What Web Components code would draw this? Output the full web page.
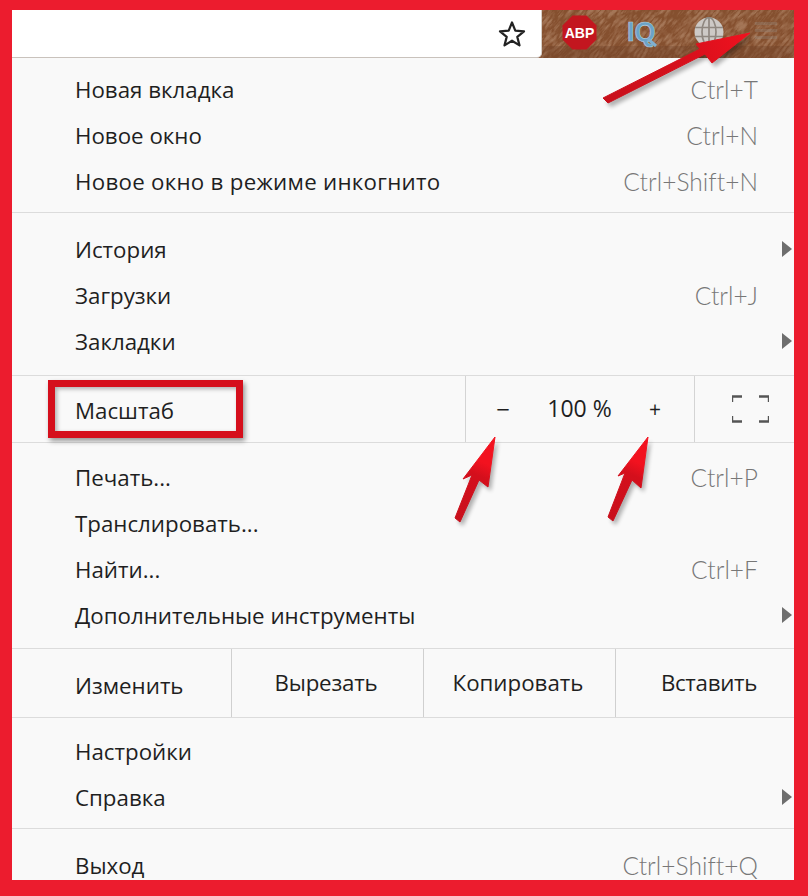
<!DOCTYPE html>
<html lang="ru"><head><meta charset="utf-8"><style>
html,body{margin:0;padding:0;background:#ec1c2e}
body{width:808px;height:896px;overflow:hidden;font-family:"Open Sans","Liberation Sans",sans-serif}
</style></head><body>
<chrome-shot>
<browser-toolbar slot="top"></browser-toolbar>
<menu-group pad="9 7">
<menu-item keys="Ctrl+T">Новая вкладка</menu-item>
<menu-item keys="Ctrl+N">Новое окно</menu-item>
<menu-item keys="Ctrl+Shift+N"><span style="letter-spacing:.27px">Новое окно в режиме инкогнито</span></menu-item>
</menu-group>
<menu-group pad="14 10">
<menu-item sub>История</menu-item>
<menu-item keys="Ctrl+J">Загрузки</menu-item>
<menu-item sub>Закладки</menu-item>
</menu-group>
<zoom-row></zoom-row>
<menu-group pad="12 9">
<menu-item keys="Ctrl+P">Печать...</menu-item>
<menu-item>Транслировать...</menu-item>
<menu-item keys="Ctrl+F">Найти...</menu-item>
<menu-item sub>Дополнительные инструменты</menu-item>
</menu-group>
<edit-row></edit-row>
<menu-group pad="11 7">
<menu-item>Настройки</menu-item>
<menu-item sub>Справка</menu-item>
</menu-group>
<menu-group pad="14 0" last>
<menu-item keys="Ctrl+Shift+Q">Выход</menu-item>
</menu-group>
<annotation-layer slot="over"></annotation-layer>
</chrome-shot>
<script>
function def(name,css,html,init){
  customElements.define(name,class extends HTMLElement{
    constructor(){super();const r=this.attachShadow({mode:"open"});r.innerHTML="<style>"+css+"</style>"+html;}
    connectedCallback(){if(init)init(this,this.shadowRoot);}
  });
}
const TXT='font:400 22.3px/46px "Open Sans","Liberation Sans",sans-serif;';
def("chrome-shot",
`:host{display:block;width:808px;height:896px;position:relative;box-sizing:border-box;padding:10px 14px 16px 12px;background:#ec1c2e}
.win{height:100%;display:flex;flex-direction:column;overflow:hidden;background:#f9f9f9}`,
`<div class="win"><slot name="top"></slot><slot></slot></div><slot name="over"></slot>`);

def("browser-toolbar",
`:host{display:flex;height:48px;flex:none;background:#8a5536}
.omni{width:530px;background:#fff;border-radius:0 0 5px 0;border-right:1px solid #d8cfc8;border-bottom:1px solid #c9c2bc;box-sizing:border-box;display:flex;justify-content:flex-end;align-items:center;padding-right:14px}
.skin{flex:1;position:relative;display:flex;align-items:center;overflow:hidden;padding-bottom:4px;box-sizing:border-box}
.tex{position:absolute;inset:0;width:100%;height:100%}
.ic{position:relative;flex:none}`,
`<div class="omni"><svg width="30" height="30" viewBox="0 0 30 30"><path d="M15 3.500l3.300 8.200 8.700.6-6.700 5.600 2.200 8.500L15 21.700l-7.500 4.700 2.200-8.500L3 12.300l8.700-.6z" fill="none" stroke="#222" stroke-width="2.200" stroke-linejoin="round"/></svg></div>
<div class="skin">
<svg class="tex" viewBox="0 0 251 48" preserveAspectRatio="none"><filter id="l" x="0" y="0" width="100%" height="100%"><feTurbulence type="turbulence" baseFrequency=".07 .24" numOctaves="3" seed="11"/><feColorMatrix values="0 0 0 0 .8  0 0 0 0 .58  0 0 0 0 .42  2.200 0 0 0 -.35"/></filter><rect width="251" height="48" fill="#85502f"/><g transform="rotate(-50 125 24)"><rect x="-30" y="-130" width="310" height="310" filter="url(#l)" opacity=".32"/></g><rect y="36" width="251" height="12" fill="#6b3f27" opacity=".3"/><g fill="#9aa3a3" opacity=".22"><rect x="212" y="12" width="22" height="3"/><rect x="212" y="19" width="22" height="3"/><rect x="212" y="26" width="22" height="3"/></g></svg>
<svg class="ic" style="margin-left:20px" width="35" height="35" viewBox="0 0 35 35"><path d="M10.500.5h14l10 10v14l-10 10h-14l-10-10v-14z" fill="#c3161f"/><text x="17.500" y="23" text-anchor="middle" font-family="Liberation Sans" font-weight="700" font-size="14" fill="#fff">ABP</text></svg>
<svg class="ic" style="margin-left:30px" width="32" height="32" viewBox="0 0 32 32"><text x="0" y="25" font-family="Liberation Sans" font-weight="700" font-size="27" fill="#6ba3c8" stroke="#b4cfdf" stroke-width=".6">IQ</text><path d="M21 23l8 7" stroke="#7fb0d0" stroke-width="3"/></svg>
<svg class="ic" style="margin-left:35px" width="30" height="30" viewBox="0 0 30 30"><circle cx="15" cy="15" r="14.500" fill="#cdc9c6"/><g stroke="#8f8780" stroke-width="1.700" fill="none"><path d="M1 10.500h28M1 19.500h28M15 .5v29"/><ellipse cx="15" cy="15" rx="7" ry="14.500"/></g></svg>
</div>`);

def("menu-group",
`:host{display:block;flex:none;box-sizing:border-box;border-bottom:1px solid #dcdcdc}:host([last]){border-bottom:0}`,
`<slot></slot>`,
(h)=>{const p=(h.getAttribute("pad")||"0 0").split(" ");h.style.paddingTop=p[0]+"px";h.style.paddingBottom=p[1]+"px";});

def("menu-item",
`:host{display:flex;height:46px;align-items:center;justify-content:space-between;padding:0 36px 0 63px;position:relative;${TXT}color:#1f1f1f}
.k{color:#777;font:300 24.500px/46px Lato,"Open Sans",sans-serif;letter-spacing:.05px}
.a{position:absolute;right:2px;top:14px;width:0;height:0;border-left:10px solid #6e6e6e;border-top:8.500px solid transparent;border-bottom:8.500px solid transparent}`,
`<span><slot></slot></span><span class="k"></span><i class="a"></i>`,
(h,r)=>{r.querySelector(".k").textContent=h.getAttribute("keys")||"";if(!h.hasAttribute("sub"))r.querySelector(".a").style.display="none";});

def("zoom-row",
`:host{display:flex;height:67px;flex:none;box-sizing:border-box;border-bottom:1px solid #dcdcdc;${TXT}color:#1f1f1f}
.l{width:453px;padding-left:63px;box-sizing:border-box;line-height:69px}
.z{width:230px;border-left:1px solid #d4d4d4;border-right:1px solid #d4d4d4;box-sizing:border-box;display:flex;align-items:center;line-height:1}
.z span{text-align:center}
.f{flex:1;display:flex;align-items:center;padding-left:37px}`,
`<div class="l">Масштаб</div>
<div class="z"><span style="width:74px;font-size:24px">−</span><span style="width:79px;font-size:23px;margin-bottom:2px">100 %</span><span style="width:72px;font-size:21px">+</span></div>
<div class="f"><svg width="37" height="28" viewBox="0 0 37 28" fill="none" stroke="#555" stroke-width="2.400"><path d="M0 7V1.500h10M27 1.500h10V7M0 21v5.500h10M27 26.500h10V21"/></svg></div>`);

def("edit-row",
`:host{display:flex;height:69px;flex:none;box-sizing:border-box;border-bottom:1px solid #dcdcdc;${TXT}color:#1f1f1f;line-height:68px}
div{flex:none;width:192px;box-sizing:border-box;border-left:1px solid #d0d0d0;text-align:center}
div:first-of-type{width:219px;border-left:0;text-align:left;padding-left:63px;line-height:74px}
div:nth-of-type(2){letter-spacing:-.2px;padding-right:3px}
div:nth-of-type(3){padding-right:3px}
div:last-of-type{flex:1;width:auto;padding-left:8px;letter-spacing:-.3px}`,
`<div>Изменить</div><div>Вырезать</div><div>Копировать</div><div>Вставить</div>`);

const arrow=(d,g)=>`<path d="${d}" fill="#000" opacity=".3" transform="translate(3 4)" filter="url(#b)"/><path d="${d}" fill="url(#${g})" stroke="url(#${g})" stroke-width="1" stroke-linejoin="round"/>`;
def("annotation-layer",
`:host{position:absolute;inset:0;display:block;pointer-events:none}
.box{position:absolute;left:48px;top:380px;width:195px;height:58px;box-sizing:border-box;border:7px solid #d50f1c;box-shadow:2px 3px 5px rgba(0,0,0,.4),inset 2px 2px 4px rgba(0,0,0,.3)}
svg{position:absolute;left:0;top:0}`,
`<div class="box"></div><svg width="808" height="896" viewBox="0 0 808 896"><filter id="b"><feGaussianBlur stdDeviation="2"/></filter>
<linearGradient id="g1" gradientUnits="userSpaceOnUse" x1="605" y1="100" x2="750" y2="33"><stop offset="0" stop-color="#c8101c"/><stop offset=".6" stop-color="#d8101c"/><stop offset="1" stop-color="#f2121f"/></linearGradient>
<linearGradient id="g2" gradientUnits="userSpaceOnUse" x1="457" y1="522" x2="495" y2="437"><stop offset="0" stop-color="#c8101c"/><stop offset=".55" stop-color="#d40f1c"/><stop offset=".7" stop-color="#f2121f"/></linearGradient>
<linearGradient id="g3" gradientUnits="userSpaceOnUse" x1="610" y1="520" x2="648" y2="437"><stop offset="0" stop-color="#c8101c"/><stop offset=".55" stop-color="#d40f1c"/><stop offset=".7" stop-color="#f2121f"/></linearGradient>
${arrow("M750 33L712 63 705 54 608 103 603 98 700 49 696 44z","g1")}
${arrow("M495 437L488 487 479 480 460 522 455 518 472 475 463 479z","g2")}
${arrow("M648 437L641 488 632 480 613 521 608 517 625 473 618 476z","g3")}
</svg>`);
</script>
</body></html>
